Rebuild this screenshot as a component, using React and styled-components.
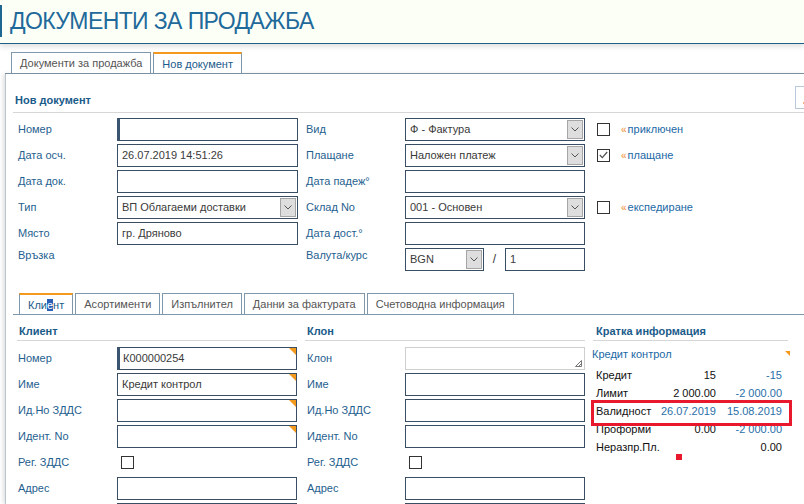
import React from 'react';
import styled, { createGlobalStyle, css } from 'styled-components';

const blue = '#1f5f8f';
const linkBlue = '#1b68a5';
const tabLine = '#7f98ab';
const orange = '#f39a1e';
const boxLine = '#3a4e63';

const GlobalStyle = createGlobalStyle`
	html, body {
		margin: 0;
		padding: 0;
		background: #fff;
		overflow: hidden;
	}
	body {
		font-family: "Liberation Sans", Arial, sans-serif;
		font-size: 11px;
		color: #333;
	}
`;

const Page = styled.div`
	width: 804px;
	height: 504px;
	overflow: hidden;
	position: relative;
`;

const Header = styled.header`
	height: 44px;
	box-sizing: border-box;
	padding-top: 5px;
	background: #fcfff6;
	border-bottom: 1px solid #1c5f88;
	box-shadow: 0 3px 5px rgba(0, 0, 0, 0.12);
	position: relative;
	z-index: 2;
`;

const Title = styled.h1`
	margin: 0;
	height: 32px;
	line-height: 32px;
	border-left: 2px solid #1d6792;
	padding-left: 8px;
	font-size: 23px;
	letter-spacing: -0.6px;
	font-weight: normal;
	color: #1f6a9b;
`;

const TabStrip = styled.div`
	display: flex;
	gap: 2px;
	padding-left: 6px;
	border-bottom: 1px solid ${tabLine};
	margin: ${({ $top }) => ($top ? '8px 0 0 5px' : '21px 0 0 0')};
`;

const Tab = styled.div`
	height: 21px;
	box-sizing: border-box;
	padding: 0 8px;
	display: flex;
	align-items: center;
	border: 1px solid ${tabLine};
	border-bottom: none;
	background: #fff;
	color: #555;
	white-space: nowrap;
	${({ $active }) =>
		$active &&
		css`
			border-top: 2px solid ${orange};
			color: #1a5b8a;
		`}
`;

const Caret = styled.span`
	background: #2a5fb5;
	color: #fff;
`;

const Panel = styled.section`
	margin-left: 5px;
	height: 430px;
	border-left: 1px solid #b9c4cc;
	box-shadow: -2px 0 4px rgba(0, 0, 0, 0.12);
	padding-left: 7px;
`;

const SectionHeading = styled.div`
	display: flex;
	justify-content: space-between;
	align-items: flex-end;
	border-bottom: 1px solid #d6d6d6;
	color: #1a5b8a;
	font-weight: bold;
	line-height: 14px;
	padding: ${({ $top }) => ($top ? '12px 0 0 2px' : '9px 0 2px 2px')};
	${({ $inset }) => $inset && `padding-left: ${$inset}px;`}
`;

const HeadingText = styled.span`
	margin-bottom: ${({ $mb }) => $mb || 0}px;
`;

const CornerButton = styled.div`
	width: 20px;
	height: 23px;
	box-sizing: border-box;
	border: 1px solid #b8c8d8;
	margin: 0 -11px 3px 0;
	position: relative;
	&::after {
		content: '';
		position: absolute;
		left: 7px;
		top: 15px;
		width: 2px;
		height: 2px;
		background: #f0b27a;
	}
`;

const FormGrid = styled.div`
	display: grid;
	grid-template-columns: 104px 181px 107px 180px 1fr;
	grid-auto-rows: 26px;
	align-items: center;
	margin-top: 3px;
`;

const Label = styled.div`
	color: ${blue};
	line-height: 14px;
	white-space: nowrap;
	padding-left: ${({ $pl }) => $pl || 0}px;
	${({ $raise }) =>
		$raise &&
		css`
			align-self: start;
			padding-top: 2px;
		`}
`;

const TextBox = styled.div`
	width: ${({ $w }) => ($w ? `${$w}px` : '100%')};
	height: 23px;
	box-sizing: border-box;
	border: 1px solid ${boxLine};
	background: #fff;
	padding: 0 4px;
	display: flex;
	align-items: center;
	color: #3a3a3a;
	white-space: nowrap;
	overflow: hidden;
	position: relative;
	${({ $focus }) =>
		$focus &&
		css`
			border-left: 3px solid #3b5571;
			padding-left: 3px;
		`}
	${({ $muted }) => $muted && `border-color: #cfcfcf;`}
	${({ $flag }) =>
		$flag &&
		css`
			&::after {
				content: '';
				position: absolute;
				top: 0;
				right: 0;
				border-top: 7px solid ${orange};
				border-left: 7px solid transparent;
			}
		`}
`;

const SelectBox = styled(TextBox)`
	padding-right: 0;
	justify-content: space-between;
`;

const Arrow = styled.div`
	width: 16px;
	align-self: stretch;
	margin: 1px;
	box-sizing: border-box;
	border: 1px solid #a5a5a5;
	background: #dedede;
	display: flex;
	align-items: center;
	justify-content: center;
`;

const Grip = styled.svg`
	position: absolute;
	right: 2px;
	bottom: 2px;
`;

const CheckItem = styled.div`
	display: flex;
	align-items: center;
	padding-left: 12px;
`;

const CheckBox = styled.div`
	width: 13px;
	height: 13px;
	box-sizing: border-box;
	border: 1px solid #333;
	background: #fff;
	display: flex;
	align-items: center;
	justify-content: center;
	margin-left: ${({ $ml }) => $ml || 0}px;
`;

const Marker = styled.span`
	margin: 0 1px 0 11px;
	color: #f08a2e;
	font-size: 10px;
`;

const CheckLabel = styled.span`
	color: ${linkBlue};
`;

const Pair = styled.div`
	display: flex;
	align-items: center;
`;

const Slash = styled.span`
	width: 21px;
	text-align: center;
	color: #333;
	font-size: 12px;
`;

const Columns = styled.div`
	display: flex;
	gap: 8px;
	padding-left: 4px;
`;

const Section = styled.div`
	width: ${({ $w }) => $w}px;
	flex: none;
`;

const FieldGrid = styled.div`
	display: grid;
	grid-template-columns: 100px 180px;
	grid-auto-rows: 26px;
	align-items: center;
	margin-top: 4px;
`;

const InfoBody = styled.div`
	position: relative;
`;

const InfoName = styled.div`
	line-height: 18px;
	margin: 4px 0 0 -1px;
	color: ${linkBlue};
`;

const InfoFlag = styled.div`
	position: absolute;
	right: -2px;
	top: 6px;
	border-top: 5px solid ${orange};
	border-left: 5px solid transparent;
`;

const InfoTable = styled.div`
	position: relative;
	display: grid;
	grid-template-columns: 58px 62px 66px;
	grid-auto-rows: 18px;
	align-items: center;
	padding-left: 3px;
	margin-top: 3px;
	color: #111;
	white-space: nowrap;
`;

const Cell = styled.div`
	text-align: ${({ $right }) => ($right ? 'right' : 'left')};
	color: ${({ $blue }) => ($blue ? '#2a6fa8' : '#111')};
`;

const Highlight = styled.div`
	position: absolute;
	left: -2px;
	top: 34px;
	width: 201px;
	height: 26px;
	box-sizing: border-box;
	border: 3px solid #e8192c;
`;

const RedDot = styled.div`
	position: absolute;
	left: 83px;
	top: 88px;
	width: 6px;
	height: 6px;
	background: #e8192c;
`;

const Chevron = () => (
	<svg width='8' height='5' viewBox='0 0 8 5'>
		<polyline points='0.5,0.5 4,4 7.5,0.5' fill='none' stroke='#555' strokeWidth='1' />
	</svg>
);

const Select = ({ value, w }) => (
	<SelectBox $w={w}>
		<span>{value}</span>
		<Arrow>
			<Chevron />
		</Arrow>
	</SelectBox>
);

const Check = ({ checked, ml }) => (
	<CheckBox $ml={ml}>
		{checked && (
			<svg width='9' height='8' viewBox='0 0 9 8'>
				<polyline points='0.8,4 3.3,6.6 8.2,1' fill='none' stroke='#555' strokeWidth='1.3' />
			</svg>
		)}
	</CheckBox>
);

const Flagged = ({ label, checked }) => (
	<CheckItem>
		<Check checked={checked} />
		<Marker>«</Marker>
		<CheckLabel>{label}</CheckLabel>
	</CheckItem>
);

const clientRows = [
	{ label: 'Номер', value: 'К000000254', focus: true },
	{ label: 'Име', value: 'Кредит контрол' },
	{ label: 'Ид.Но ЗДДС', value: '' },
	{ label: 'Идент. No', value: '' },
];

const branchRows = ['Име', 'Ид.Но ЗДДС', 'Идент. No'];

const infoRows = [
	{ label: 'Кредит', a: '15', b: '-15', bBlue: true },
	{ label: 'Лимит', a: '2 000.00', b: '-2 000.00', bBlue: true },
	{ label: 'Валидност', a: '26.07.2019', b: '15.08.2019', aBlue: true, bBlue: true },
	{ label: 'Проформи', a: '0.00', b: '-2 000.00', bBlue: true },
	{ label: 'Неразпр.Пл.', a: '', b: '0.00' },
];

const App = () => {
	return (
		<Page>
			<GlobalStyle />
			<Header>
				<Title>ДОКУМЕНТИ ЗА ПРОДАЖБА</Title>
			</Header>
			<TabStrip $top>
				<Tab>Документи за продажба</Tab>
				<Tab $active>Нов документ</Tab>
			</TabStrip>
			<Panel>
				<SectionHeading $top>
					<HeadingText $mb={5}>Нов документ</HeadingText>
					<CornerButton />
				</SectionHeading>
				<FormGrid>
					<Label $pl={5}>Номер</Label>
					<TextBox $focus />
					<Label $pl={8}>Вид</Label>
					<Select value='Ф - Фактура' />
					<Flagged label='приключен' />

					<Label $pl={5}>Дата осч.</Label>
					<TextBox>26.07.2019 14:51:26</TextBox>
					<Label $pl={8}>Плащане</Label>
					<Select value='Наложен платеж' />
					<Flagged label='плащане' checked />

					<Label $pl={5}>Дата док.</Label>
					<TextBox />
					<Label $pl={8}>Дата падеж°</Label>
					<TextBox />
					<div />

					<Label $pl={5}>Тип</Label>
					<Select value='ВП Облагаеми доставки' />
					<Label $pl={8}>Склад No</Label>
					<Select value='001 - Основен' />
					<Flagged label='експедиране' />

					<Label $pl={5}>Място</Label>
					<TextBox>гр. Дряново</TextBox>
					<Label $pl={8}>Дата дост.°</Label>
					<TextBox />
					<div />

					<Label $pl={5} $raise>
						Връзка
					</Label>
					<div />
					<Label $pl={8} $raise>
						Валута/курс
					</Label>
					<Pair>
						<Select value='BGN' w={79} />
						<Slash>/</Slash>
						<TextBox $w={80}>1</TextBox>
					</Pair>
					<div />
				</FormGrid>

				<TabStrip>
					<Tab $active>
						Кли<Caret>е</Caret>нт
					</Tab>
					<Tab>Асортименти</Tab>
					<Tab>Изпълнител</Tab>
					<Tab>Данни за фактурата</Tab>
					<Tab>Счетоводна информация</Tab>
				</TabStrip>

				<Columns>
					<Section $w={280}>
						<SectionHeading>Клиент</SectionHeading>
						<FieldGrid>
							{clientRows.map((r) => (
								<React.Fragment key={r.label}>
									<Label $pl={1}>{r.label}</Label>
									<TextBox $flag $focus={r.focus}>
										{r.value}
									</TextBox>
								</React.Fragment>
							))}
							<Label $pl={1}>Рег. ЗДДС</Label>
							<Check ml={4} />
							<Label $pl={1}>Адрес</Label>
							<TextBox />
							<div />
							<TextBox />
						</FieldGrid>
					</Section>

					<Section $w={280}>
						<SectionHeading>Клон</SectionHeading>
						<FieldGrid>
							<Label $pl={2}>Клон</Label>
							<TextBox $muted>
								<Grip width='7' height='7' viewBox='0 0 7 7'>
									<path d='M6.5 0.5 L0.5 6.5 M6.5 3.5 L3.5 6.5 M0.5 6.5 H6.5 V0.5' fill='none' stroke='#777' strokeWidth='1' />
								</Grip>
							</TextBox>
							{branchRows.map((l) => (
								<React.Fragment key={l}>
									<Label $pl={2}>{l}</Label>
									<TextBox />
								</React.Fragment>
							))}
							<Label $pl={2}>Рег. ЗДДС</Label>
							<Check ml={4} />
							<Label $pl={2}>Адрес</Label>
							<TextBox />
							<div />
							<TextBox />
						</FieldGrid>
					</Section>

					<Section $w={195}>
						<SectionHeading $inset={3}>Кратка информация</SectionHeading>
						<InfoBody>
							<InfoName>Кредит контрол</InfoName>
							<InfoFlag />
							<InfoTable>
								{infoRows.map((r) => (
									<React.Fragment key={r.label}>
										<Cell>{r.label}</Cell>
										<Cell $right $blue={r.aBlue}>
											{r.a}
										</Cell>
										<Cell $right $blue={r.bBlue}>
											{r.b}
										</Cell>
									</React.Fragment>
								))}
								<Highlight />
								<RedDot />
							</InfoTable>
						</InfoBody>
					</Section>
				</Columns>
			</Panel>
		</Page>
	);
};

export default App;
